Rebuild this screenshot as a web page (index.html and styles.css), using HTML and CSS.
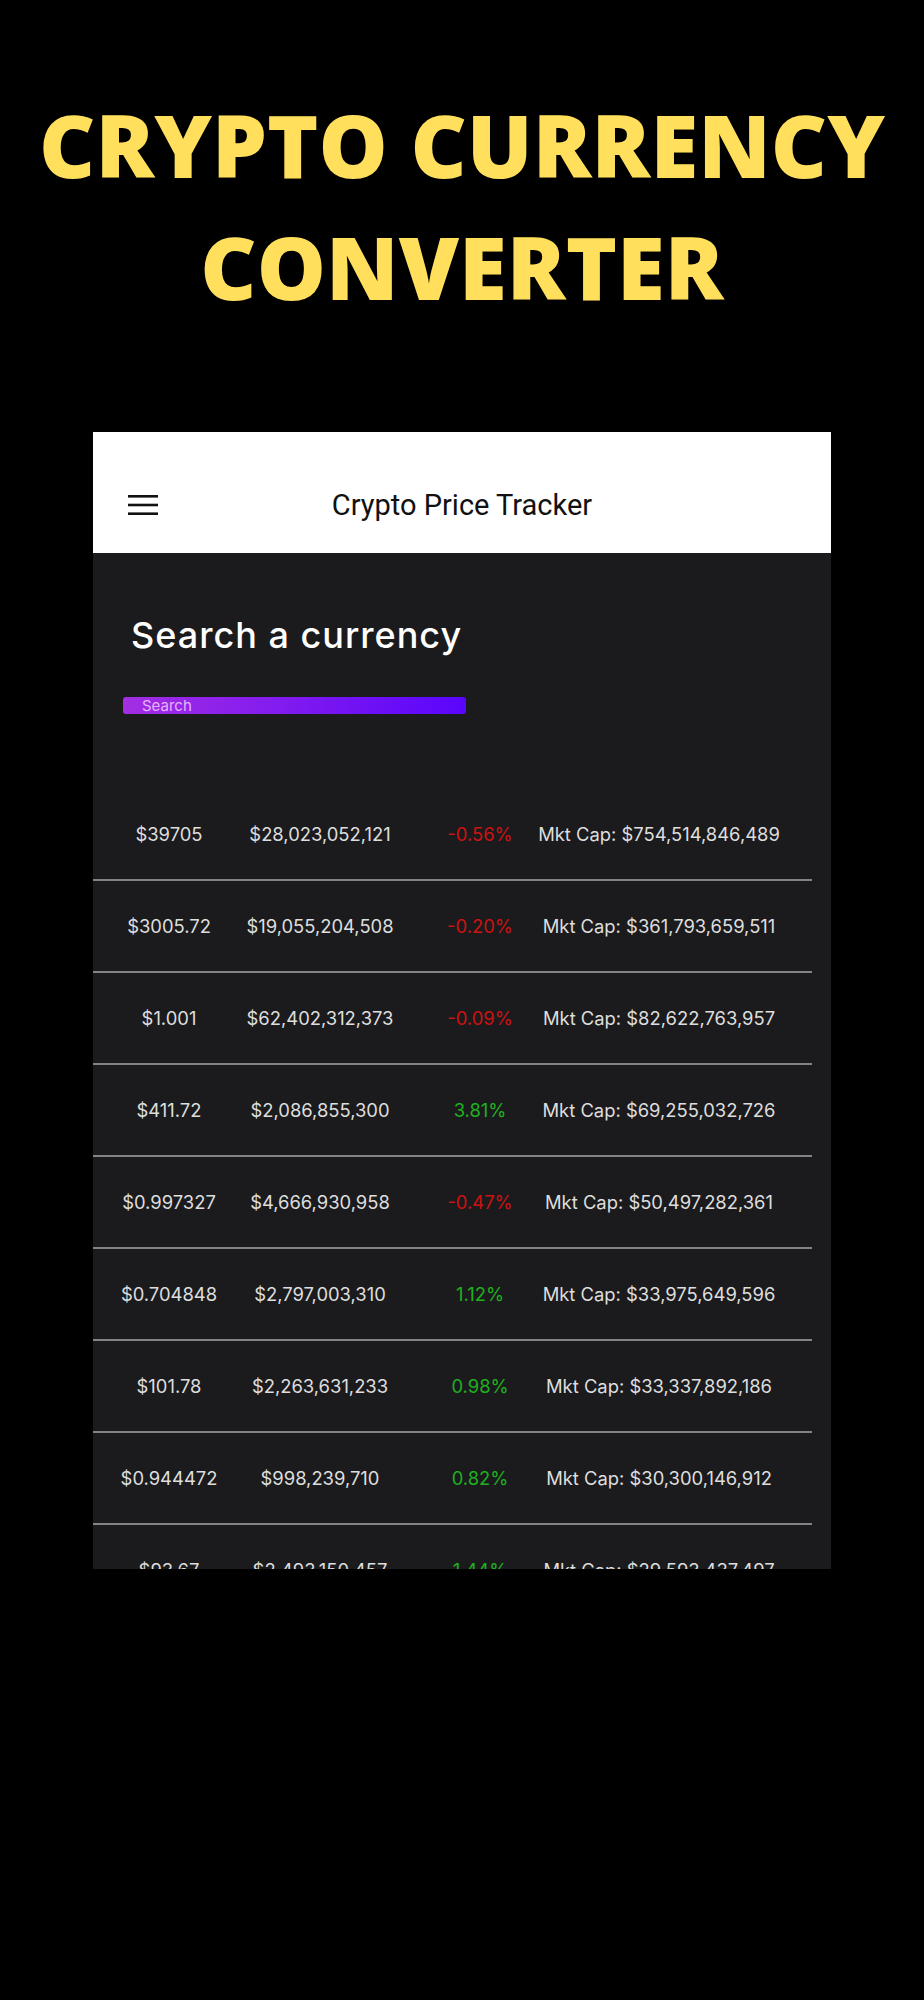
FILE: index.html
```html
<!DOCTYPE html>
<html lang="en">
  <head>
    <meta charset="UTF-8" />
    <meta name="viewport" content="width=device-width, initial-scale=1.0" />
    <title>Crypto Currency Converter</title>
    <link rel="stylesheet" href="styles.css">
  </head>
  <body>
    <h1 class="banner">CRYPTO CURRENCY<br />CONVERTER</h1>

    <div class="phone">
      <header class="app-bar">
        <button class="menu-btn" aria-label="Menu">
          <svg width="30" height="20" viewBox="0 0 30 20">
            <rect x="0" y="0" width="30" height="2.6" fill="#111" />
            <rect x="0" y="8.7" width="30" height="2.6" fill="#111" />
            <rect x="0" y="17.4" width="30" height="2.6" fill="#111" />
          </svg>
        </button>
        <h2 class="app-title">Crypto Price Tracker</h2>
        <span></span>
      </header>

      <main class="coin-app">
        <div class="coin-search">
          <h3 class="coin-text">Search a currency</h3>
          <input class="coin-input" type="text" placeholder="Search" />
        </div>

        <div class="coin-list">
          <div class="coin-row">
            <span class="coin-price">$39705</span>
            <span class="coin-volume">$28,023,052,121</span>
            <span class="coin-percent red">-0.56%</span>
            <span class="coin-marketcap">Mkt Cap: $754,514,846,489</span>
          </div>
          <div class="coin-row">
            <span class="coin-price">$3005.72</span>
            <span class="coin-volume">$19,055,204,508</span>
            <span class="coin-percent red">-0.20%</span>
            <span class="coin-marketcap">Mkt Cap: $361,793,659,511</span>
          </div>
          <div class="coin-row">
            <span class="coin-price">$1.001</span>
            <span class="coin-volume">$62,402,312,373</span>
            <span class="coin-percent red">-0.09%</span>
            <span class="coin-marketcap">Mkt Cap: $82,622,763,957</span>
          </div>
          <div class="coin-row">
            <span class="coin-price">$411.72</span>
            <span class="coin-volume">$2,086,855,300</span>
            <span class="coin-percent green">3.81%</span>
            <span class="coin-marketcap">Mkt Cap: $69,255,032,726</span>
          </div>
          <div class="coin-row">
            <span class="coin-price">$0.997327</span>
            <span class="coin-volume">$4,666,930,958</span>
            <span class="coin-percent red">-0.47%</span>
            <span class="coin-marketcap">Mkt Cap: $50,497,282,361</span>
          </div>
          <div class="coin-row">
            <span class="coin-price">$0.704848</span>
            <span class="coin-volume">$2,797,003,310</span>
            <span class="coin-percent green">1.12%</span>
            <span class="coin-marketcap">Mkt Cap: $33,975,649,596</span>
          </div>
          <div class="coin-row">
            <span class="coin-price">$101.78</span>
            <span class="coin-volume">$2,263,631,233</span>
            <span class="coin-percent green">0.98%</span>
            <span class="coin-marketcap">Mkt Cap: $33,337,892,186</span>
          </div>
          <div class="coin-row">
            <span class="coin-price">$0.944472</span>
            <span class="coin-volume">$998,239,710</span>
            <span class="coin-percent green">0.82%</span>
            <span class="coin-marketcap">Mkt Cap: $30,300,146,912</span>
          </div>
          <div class="coin-row">
            <span class="coin-price">$93.67</span>
            <span class="coin-volume">$2,493,150,457</span>
            <span class="coin-percent green">1.44%</span>
            <span class="coin-marketcap">Mkt Cap: $29,593,437,497</span>
          </div>
        </div>
      </main>
    </div>
  </body>
</html>
```

FILE: styles.css
```css
body {
  margin: 0;
  min-height: 2000px;
  background-color: #000000;
  font-family: Inter, "Noto Sans", sans-serif;
}

.banner {
  margin: 83px 0 0;
  font-family: "Open Sans", sans-serif;
  font-weight: 800;
  font-size: 87px;
  line-height: 122px;
  text-align: center;
  color: #ffdf5c;
}

.phone {
  margin: 105px 0 0 93px;
  width: 738px;
  height: 1137px;
  overflow: hidden;
  background: #1b1b1d;
}

.app-bar {
  display: grid;
  grid-template-columns: 1fr auto 1fr;
  align-items: center;
  box-sizing: border-box;
  height: 121px;
  padding-top: 25px;
  background: #ffffff;
}
.menu-btn {
  justify-self: start;
  margin-left: 35px;
  padding: 0;
  border: none;
  background: none;
  line-height: 0;
}
.app-title {
  margin: 0;
  font-family: Roboto, sans-serif;
  font-weight: 400;
  font-size: 29px;
  color: #111111;
}

.coin-app {
  padding-top: 60px;
}
.coin-search {
  padding-left: 30px;
}
.coin-text {
  margin: 0 0 40px 8px;
  font-weight: 500;
  font-size: 36px;
  line-height: 44px;
  letter-spacing: 1px;
  color: #ffffff;
}
.coin-input {
  display: block;
  box-sizing: border-box;
  width: 343px;
  height: 17px;
  padding: 0 0 0 19px;
  border: none;
  border-radius: 3px;
  background-image: linear-gradient(-90deg, #5a05fc, #a32ee3);
  font-family: Inter, sans-serif;
  font-size: 15px;
  color: #ffffff;
  outline: none;
}
.coin-input::placeholder {
  color: #e6b3ff;
}

.coin-list {
  margin: 75px 19px 0 0;
}
.coin-row {
  display: flex;
  align-items: center;
  height: 90px;
  border-bottom: 2px solid #838383;
  font-size: 18.4px;
  color: #dedede;
  white-space: nowrap;
}
.coin-row span {
  text-align: center;
}
.coin-price {
  width: 152px;
}
.coin-volume {
  width: 150px;
}
.coin-percent {
  width: 100px;
  margin-left: 35px;
}
.coin-marketcap {
  width: 250px;
  margin-left: 4px;
}
.red {
  color: #cc1212;
}
.green {
  color: #1fb01f;
}
```
